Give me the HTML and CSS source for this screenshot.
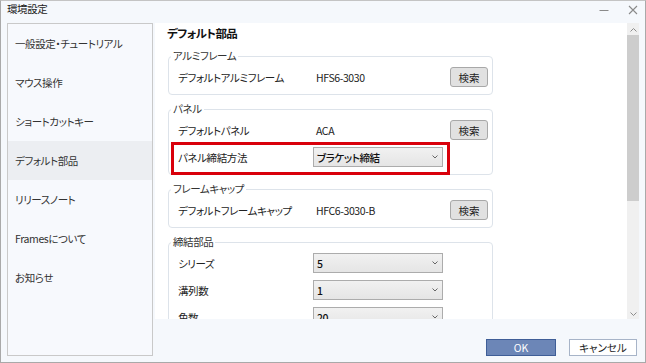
FILE: index.html
```html
<!DOCTYPE html>
<html lang="ja">
<head>
<meta charset="utf-8">
<title>環境設定</title>
<link rel="stylesheet" href="styles.css">
</head>
<body>
<div class="window">
  <div class="titlebar">
    <span class="title">環境設定</span>
    <div class="controls">
      <svg class="ctl" width="12" height="12" viewBox="0 0 12 12"><path d="M1.5 6.5h9" stroke="#8a8a8a" stroke-width="1"/></svg>
      <svg class="ctl" width="12" height="12" viewBox="0 0 12 12"><path d="M2 2l8 8M10 2l-8 8" stroke="#8a8a8a" stroke-width="1.1"/></svg>
    </div>
  </div>
  <div class="body">
    <nav class="sidebar">
      <div class="nav-item">一般設定・チュートリアル</div>
      <div class="nav-item">マウス操作</div>
      <div class="nav-item">ショートカットキー</div>
      <div class="nav-item active">デフォルト部品</div>
      <div class="nav-item">リリースノート</div>
      <div class="nav-item">Framesについて</div>
      <div class="nav-item">お知らせ</div>
    </nav>
    <div class="right">
      <div class="panel">
        <div class="content">
          <h2 class="heading">デフォルト部品</h2>
          <fieldset class="group">
            <legend>アルミフレーム</legend>
            <div class="row">
              <span class="label">デフォルトアルミフレーム</span>
              <span class="value">HFS6-3030</span>
              <button class="search">検索</button>
            </div>
          </fieldset>
          <fieldset class="group">
            <legend>パネル</legend>
            <div class="row">
              <span class="label">デフォルトパネル</span>
              <span class="value">ACA</span>
              <button class="search">検索</button>
            </div>
            <div class="row marked">
              <span class="label">パネル締結方法</span>
              <div class="select"><span>ブラケット締結</span><svg width="6" height="4" viewBox="0 0 6 4"><path d="M0.5 0.5l2.5 2.5 2.5-2.5" fill="none" stroke="#666" stroke-width="1"/></svg></div>
            </div>
          </fieldset>
          <fieldset class="group">
            <legend>フレームキャップ</legend>
            <div class="row">
              <span class="label">デフォルトフレームキャップ</span>
              <span class="value">HFC6-3030-B</span>
              <button class="search">検索</button>
            </div>
          </fieldset>
          <fieldset class="group">
            <legend>締結部品</legend>
            <div class="row">
              <span class="label">シリーズ</span>
              <div class="select"><span>5</span><svg width="6" height="4" viewBox="0 0 6 4"><path d="M0.5 0.5l2.5 2.5 2.5-2.5" fill="none" stroke="#666" stroke-width="1"/></svg></div>
            </div>
            <div class="row">
              <span class="label">溝列数</span>
              <div class="select"><span>1</span><svg width="6" height="4" viewBox="0 0 6 4"><path d="M0.5 0.5l2.5 2.5 2.5-2.5" fill="none" stroke="#666" stroke-width="1"/></svg></div>
            </div>
            <div class="row">
              <span class="label">角数</span>
              <div class="select"><span>20</span><svg width="6" height="4" viewBox="0 0 6 4"><path d="M0.5 0.5l2.5 2.5 2.5-2.5" fill="none" stroke="#666" stroke-width="1"/></svg></div>
            </div>
          </fieldset>
        </div>
        <div class="scrollbar">
          <div class="sb-arrow"><svg width="7" height="4" viewBox="0 0 7 4"><path d="M0.5 3.5l3-3 3 3" fill="none" stroke="#8c8c8c" stroke-width="1"/></svg></div>
          <div class="sb-thumb"></div>
          <div class="sb-track"></div>
          <div class="sb-arrow"><svg width="7" height="4" viewBox="0 0 7 4"><path d="M0.5 0.5l3 3 3-3" fill="none" stroke="#8c8c8c" stroke-width="1"/></svg></div>
        </div>
      </div>
      <div class="footer">
        <button class="btn ok">OK</button>
        <button class="btn cancel">キャンセル</button>
      </div>
    </div>
  </div>
</div>
</body>
</html>
```

FILE: styles.css
```css
*, *::before, *::after { box-sizing: border-box; }
html, body { margin: 0; padding: 0; }
body {
  width: 646px;
  height: 363px;
  overflow: hidden;
  background: #f5f8fc;
  font-family: "Noto Sans CJK JP", "Noto Sans", sans-serif;
  font-size: 10.5px;
  letter-spacing: -0.4px;
  color: #222;
  font-feature-settings: "palt";
}
.window {
  width: 646px;
  height: 363px;
  border: 1px solid #a9a9a9;
  border-top-color: #c4c4c4;
  display: flex;
  flex-direction: column;
}
.titlebar {
  flex: none;
  height: 22px;
  display: flex;
  justify-content: space-between;
  align-items: flex-start;
  padding: 0 6px 0 6px;
}
.title { line-height: 16px; color: #222; }
.controls { display: flex; gap: 17px; padding-top: 3px; }
.ctl { display: block; }
.body {
  flex: 1;
  display: flex;
  gap: 2px;
  padding: 0 6px 6px 6px;
}
.sidebar {
  width: 146px;
  border: 1px solid #c9c9c9;
  background: #f7f9fd;
}
.nav-item {
  height: 39px;
  line-height: 39px;
  padding-left: 7px;
  color: #333;
}
.nav-item.active { background: #eceef2; }
.right {
  width: 484px;
  display: flex;
  flex-direction: column;
}
.panel {
  height: 296px;
  display: flex;
  background: #fff;
}
.content {
  flex: 1;
  overflow: hidden;
  padding: 2px 0 0 12px;
}
.heading {
  margin: 0;
  font-size: 11.5px;
  letter-spacing: -0.6px;
  font-weight: bold;
  line-height: 16px;
  color: #111;
}
.group {
  width: 325px;
  margin: 7px 0 0 1px;
  padding: 4px 4px 7px 9px;
  border: 1px solid #dde3ea;
  border-radius: 4px;
  min-width: 0;
}
.group:first-of-type { margin-top: 8px; }
.group legend {
  line-height: 14px;
  padding: 0 2px;
  margin-left: -7px;
  color: #333;
}
.row {
  display: flex;
  align-items: center;
  width: 100%;
  height: 20px;
}
.row + .row { margin-top: 7px; }
.label { flex: none; width: 135px; }
.value { flex: none; width: 130px; padding-left: 3px; color: #222; }
.search {
  flex: none;
  margin-left: auto;
  width: 38px;
  height: 20px;
  padding: 0;
  border: 1px solid #a8a8a8;
  border-radius: 3px;
  background: #e1e1e1;
  font: inherit;
  color: #222;
}
.select {
  flex: none;
  width: 130px;
  height: 20px;
  border: 1px solid #acacac;
  background: linear-gradient(#f1f1f1, #e5e5e5);
  display: flex;
  align-items: center;
  justify-content: space-between;
  padding: 0 4px 0 3px;
  color: #111;
  font-weight: 500;
}
.select svg { display: block; }
.row.marked { position: relative; }
.row.marked::after {
  content: "";
  position: absolute;
  left: -7px;
  top: -5px;
  width: 279px;
  height: 33px;
  border: 3px solid #d9000b;
  pointer-events: none;
}
.scrollbar {
  width: 12px;
  display: flex;
  flex-direction: column;
  background: #f0f0f0;
  padding-top: 1px;
}
.sb-arrow {
  height: 11px;
  display: flex;
  align-items: center;
  justify-content: center;
}
.sb-thumb { height: 166px; background: #cdcdcd; }
.sb-track { flex: 1; }
.footer {
  display: flex;
  justify-content: flex-end;
  gap: 13px;
  padding: 20px 2px 0 0;
}
.btn {
  height: 17px;
  padding: 0;
  font: inherit;
  line-height: 15px;
}
.ok {
  width: 70px;
  background: #6c86b7;
  border: 1px solid #3f5e97;
  color: #fff;
}
.cancel {
  width: 68px;
  background: #fff;
  border: 1px solid #a7b4c8;
  color: #222;
}
```
